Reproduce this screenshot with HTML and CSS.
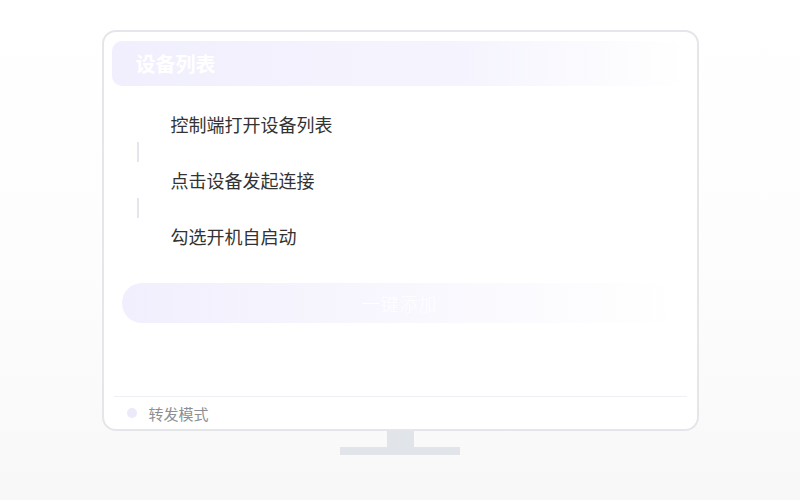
FILE: index.html
```html
<!DOCTYPE html>
<html lang="zh-CN">
<head>
<meta charset="utf-8">
<title>设备列表</title>
<link rel="stylesheet" href="styles.css">
</head>
<body>
<div class="stage">
  <div class="monitor">
    <div class="header">设备列表</div>
    <div class="steps">
      <div class="step">控制端打开设备列表</div>
      <div class="connector"></div>
      <div class="step">点击设备发起连接</div>
      <div class="connector"></div>
      <div class="step">勾选开机自启动</div>
    </div>
    <div class="action">一键添加</div>
    <div class="footer">
      <span class="dot"></span>
      <span class="mode">转发模式</span>
    </div>
  </div>
  <div class="neck"></div>
  <div class="base"></div>
</div>
</body>
</html>
```
FILE: styles.css
```css
html, body {
  margin: 0;
  padding: 0;
}
body {
  width: 800px;
  height: 500px;
  background: linear-gradient(180deg, #ffffff 0%, #fdfdfd 50%, #f8f8f9 100%);
  font-family: "Noto Sans CJK SC", "Noto Sans", sans-serif;
  overflow: hidden;
}
.stage {
  display: flex;
  flex-direction: column;
  align-items: center;
  padding-top: 30px;
}
.monitor {
  box-sizing: border-box;
  width: 597px;
  height: 401px;
  border: 2px solid #e4e6ea;
  border-radius: 14px;
  background: #ffffff;
  padding: 9px 10px 0 8px;
  display: flex;
  flex-direction: column;
}
.header {
  height: 45px;
  border-radius: 10px;
  background: linear-gradient(90deg, #f1effd 0%, #f5f4fe 60%, rgba(255,255,255,0) 100%);
  color: #ffffff;
  font-size: 20px;
  font-weight: 700;
  line-height: 46px;
  padding-left: 24px;
}
.steps {
  margin-top: 20px;
  display: flex;
  flex-direction: column;
}
.step {
  height: 36px;
  line-height: 36px;
  font-size: 18px;
  color: #333333;
  padding-left: 59px;
  font-weight: 400;
}
.connector {
  width: 2px;
  height: 20px;
  margin-left: 25px;
  background: #e3e6ec;
}
.action {
  margin: 29px 0 0 10px;
  width: 556px;
  height: 40px;
  border-radius: 20px;
  background: linear-gradient(90deg, #f1effd 0%, #f8f7fe 50%, rgba(255,255,255,0) 100%);
  color: #ffffff;
  font-size: 18px;
  letter-spacing: 1px;
  line-height: 40px;
  text-align: center;
  font-weight: 300;
}
.footer {
  margin-top: auto;
  margin-left: 2px;
  height: 32px;
  border-top: 1px solid #eef0f3;
  display: flex;
  align-items: center;
}
.dot {
  width: 10px;
  height: 10px;
  border-radius: 50%;
  background: #ece9fb;
  margin-left: 13px;
}
.mode {
  margin-left: 12px;
  font-size: 15px;
  color: #8c8f96;
}
.neck {
  width: 27px;
  height: 16px;
  background: #e1e4e9;
}
.base {
  width: 120px;
  height: 8px;
  background: #e1e4e9;
}
```
